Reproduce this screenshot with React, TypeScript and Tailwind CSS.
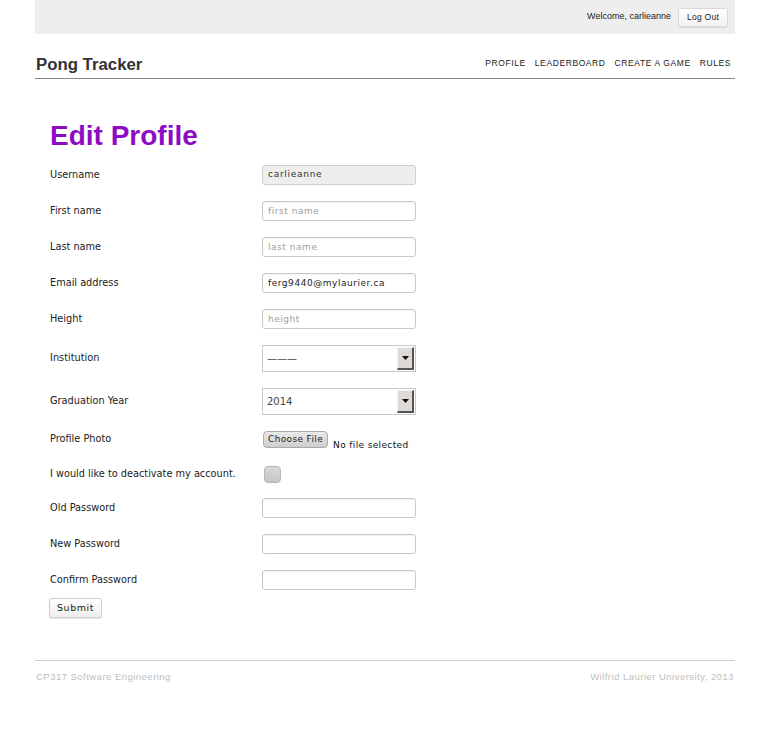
import React from 'react';

const label = "w-[212px] shrink-0 text-[9.75px] text-[#222] font-['DejaVu_Sans',sans-serif]";
const inputBox =
  "w-[154px] h-[20px] rounded-[3px] border border-[#c8c8c8] bg-white px-[5px] text-[9px] tracking-[0.06em] text-[#222] font-['DejaVu_Sans',sans-serif] placeholder:text-[#a0a0a0] outline-none shadow-[inset_0_1px_1px_rgba(0,0,0,0.05)]";

function TextRow({ name, placeholder, value, type = 'text' }: { name: string; placeholder?: string; value?: string; type?: string }) {
  return (
    <div className="flex items-center h-[20px] mb-[16px]">
      <span className={label}>{name}</span>
      <input className={inputBox} type={type} placeholder={placeholder} defaultValue={value} />
    </div>
  );
}

function SelectRow({ name, value }: { name: string; value: string }) {
  return (
    <div className="flex items-center h-[27px] mb-[16px]">
      <span className={label}>{name}</span>
      <div className="w-[154px] h-[27px] border border-[#c8c8c8] bg-white flex items-center justify-between pl-[4px] pr-[1px]">
        <span className="text-[10px] text-[#444] font-['DejaVu_Sans',sans-serif]">{value}</span>
        <span className="w-[17px] h-[23px] bg-[#dedbd6] border-t border-l border-t-[#f4f4f4] border-l-[#f4f4f4] border-r-2 border-b-2 border-r-[#555] border-b-[#555] flex items-center justify-center">
          <svg width="7" height="4" viewBox="0 0 7 4"><path d="M0 0h7L3.5 4z" fill="#111" /></svg>
        </span>
      </div>
    </div>
  );
}

export default function App() {
  return (
    <div className="w-[766px] min-h-[729px] bg-white font-['Liberation_Sans',Arial,sans-serif]">
      <div className="ml-[35px] w-[700px]">
        {/* top bar */}
        <div className="h-[34px] bg-[#eeeeee] flex items-center justify-end pr-[7px] gap-[7px]">
          <span className="text-[9px] text-[#222]">Welcome, carlieanne</span>
          <button className="h-[19px] px-[8px] rounded-[2px] border border-[#d8d8d8] bg-gradient-to-b from-white to-[#f2f2f2] text-[8.5px] text-[#222] tracking-[0.03em] shadow-[0_1px_1px_rgba(0,0,0,0.08)]">
            Log Out
          </button>
        </div>

        {/* header */}
        <div className="h-[45px] flex items-end justify-between pb-[4px] border-b border-[#888]">
          <span className="pl-[1px] text-[16.8px] font-bold text-[#333] leading-[19px]">Pong Tracker</span>
          <nav className="flex gap-[9px] pr-[4px] pb-[4px] text-[8.5px] tracking-[0.07em] text-[#222]">
            <span>PROFILE</span>
            <span>LEADERBOARD</span>
            <span>CREATE A GAME</span>
            <span>RULES</span>
          </nav>
        </div>

        {/* form */}
        <div className="pl-[15px] pt-[41px]">
          <h1 className="text-[28px] font-bold text-[#8c0cc6] leading-[32px] mb-[13px]">Edit Profile</h1>

          <div className="flex items-center h-[20px] mb-[16px]">
            <span className={label}>Username</span>
            <div className="w-[154px] h-[20px] rounded-[3px] border border-[#cfcfcf] bg-[#eeeeee] px-[5px] flex items-center text-[9px] tracking-[0.08em] text-[#333] font-['DejaVu_Sans',sans-serif]">
              carlieanne
            </div>
          </div>
          <TextRow name="First name" placeholder="first name" />
          <TextRow name="Last name" placeholder="last name" />
          <TextRow name="Email address" value="ferg9440@mylaurier.ca" />
          <TextRow name="Height" placeholder="height" />
          <SelectRow name="Institution" value="———" />
          <SelectRow name="Graduation Year" value="2014" />

          <div className="flex items-center h-[17px] mt-[3px] mb-[17px]">
            <span className={label}>Profile Photo</span>
            <div className="flex items-end gap-[5px] pl-[1px]">
              <span className="h-[17px] px-[4px] rounded-[4px] border border-[#aaa] bg-gradient-to-b from-[#eaeaea] to-[#cfcfcf] text-[9px] tracking-[0.04em] text-[#222] flex items-center font-['DejaVu_Sans',sans-serif]">
                Choose File
              </span>
              <span className="text-[9px] tracking-[0.04em] text-[#111] translate-y-[4px] font-['DejaVu_Sans',sans-serif]">No file selected</span>
            </div>
          </div>

          <div className="flex items-center h-[18px] mb-[15px]">
            <span className={label}>I would like to deactivate my account.</span>
            <span className="ml-[2px] w-[17px] h-[17px] rounded-[4px] border border-[#b5b5b5] bg-gradient-to-b from-[#d8d8d8] to-[#c6c6c6]" />
          </div>

          <TextRow name="Old Password" type="password" />
          <TextRow name="New Password" type="password" />
          <div className="flex items-center h-[20px] mb-[8px]">
            <span className={label}>Confirm Password</span>
            <input className={inputBox} type="password" />
          </div>

          <button className="block -ml-[1px] w-[53px] h-[20px] rounded-[2px] border border-[#d0d0d0] bg-gradient-to-b from-white to-[#eeeeee] text-[9.5px] tracking-[0.06em] text-[#222] shadow-[0_1px_1px_rgba(0,0,0,0.1)] font-['DejaVu_Sans',sans-serif]">
            Submit
          </button>
        </div>

        {/* footer */}
        <div className="mt-[42px] border-t border-[#cccccc] pt-[9px] flex justify-between px-[1px] text-[9.5px] tracking-[0.05em] text-[#c0c0c0]">
          <span>CP317 Software Engineering</span>
          <span>Wilfrid Laurier University, 2013</span>
        </div>
      </div>
    </div>
  );
}
